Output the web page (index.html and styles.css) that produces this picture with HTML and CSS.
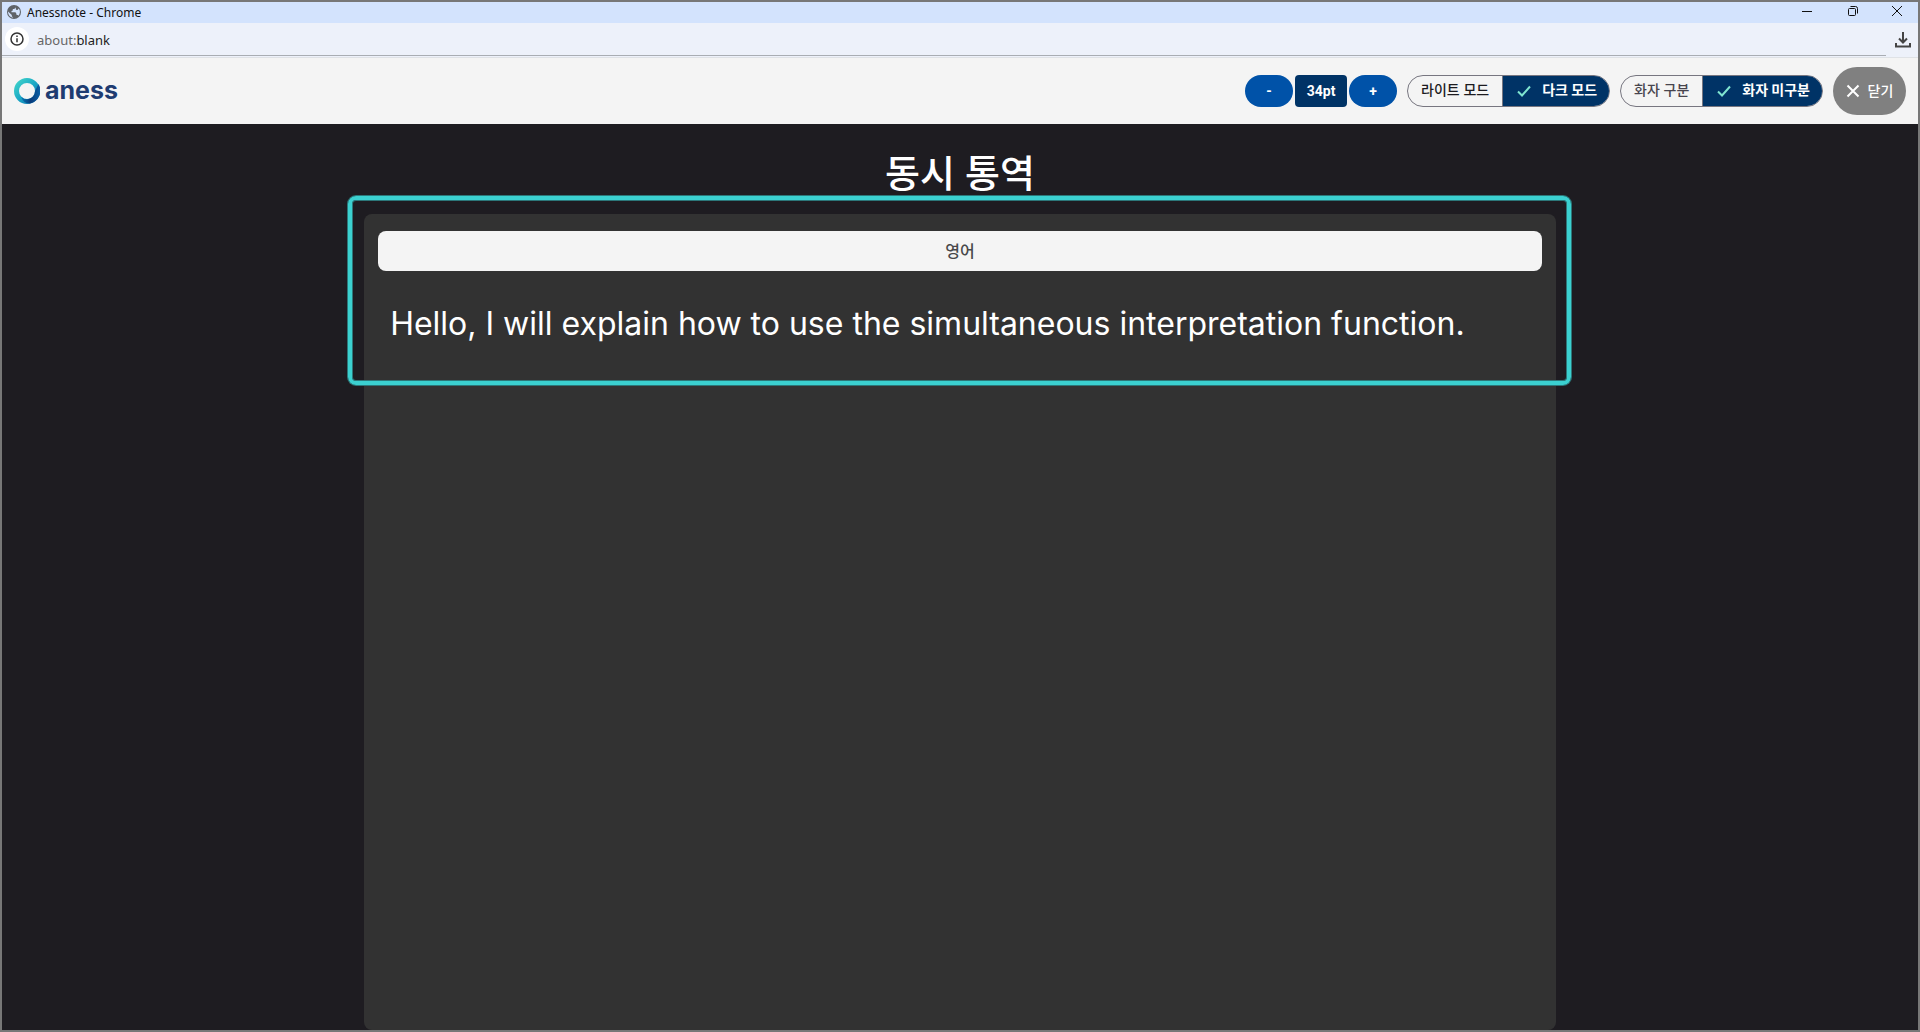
FILE: index.html
```html
<!DOCTYPE html>
<html lang="ko">
<head>
<meta charset="utf-8">
<title>Anessnote</title>
<link rel="stylesheet" href="styles.css">
</head>
<body>
<div class="window">
  <div class="titlebar">
    <svg class="globe" width="14" height="14" viewBox="0 0 14 14"><circle cx="7" cy="7" r="7" fill="#5f6368"/><path d="M1 6.500L4.800 10v1.200l1.500 1.500C3 12.400 1 9.800 1 6.500zM8.500 1.600v1.200L7.200 4H5.800v1.500L4.500 6v1.200h4L9.500 9v1h1.200l.8.700c1.700-2 2-5 .3-7.200L10.500 5 9 4.800z" fill="#d3e3fd"/></svg>
    <span class="window-title">Anessnote - Chrome</span>
    <div class="window-controls">
      <button type="button" aria-label="Minimize"><svg width="12" height="12" viewBox="0 0 12 12"><path d="M1 6.500h10"/></svg></button>
      <button type="button" aria-label="Restore"><svg width="12" height="12" viewBox="0 0 12 12"><rect x="1.500" y="3.500" width="7" height="7" rx="1"/><path d="M3.500 1.500h5q2 0 2 2v5"/></svg></button>
      <button type="button" aria-label="Close window"><svg width="12" height="12" viewBox="0 0 12 12"><path d="M1 1l10 10M11 1L1 11"/></svg></button>
    </div>
  </div>
  <div class="address">
    <div class="address-field">
      <span class="info"><svg width="14" height="14" viewBox="0 0 14 14" fill="none" stroke="#333" stroke-width="1.500"><circle cx="7" cy="7" r="6"/><path d="M7 6.200v4M7 3.600v1.500"/></svg></span>
      <span class="url"><span class="scheme">about:</span>blank</span>
    </div>
    <button class="download" type="button" aria-label="Downloads"><svg width="16" height="16" viewBox="0 0 16 16" fill="none" stroke="#444" stroke-width="2"><path d="M8 0v10M4 6.500l4 4 4-4M1 11v3.500h14V11"/></svg></button>
  </div>
  <header class="header">
    <a class="logo" href="#">
      <svg width="26" height="26" viewBox="0 0 26 26">
        <defs>
          <linearGradient id="ring" x1="0" y1="0" x2="1" y2="1"><stop offset="0" stop-color="#47dcc9"/><stop offset=".5" stop-color="#1ba8c6"/><stop offset="1" stop-color="#0a5fa6"/></linearGradient>
          <linearGradient id="shade" x1="0" y1="0" x2="1" y2="0"><stop offset="0" stop-color="#0778b8"/><stop offset=".5" stop-color="#083a7a"/><stop offset="1" stop-color="#0b62a8"/></linearGradient>
        </defs>
        <path fill="url(#ring)" fill-rule="evenodd" d="M13 0a13 13 0 1 1 0 26 13 13 0 0 1 0-26zm0 5a8 8 0 1 0 0 16 8 8 0 0 0 0-16z"/>
        <path fill="url(#shade)" d="M7 18.500Q10 22 14.500 21A8 8 0 0 0 21 13l3.500-7A13 13 0 0 1 16 25.500Q9.500 26 7 18.500z"/>
      </svg>
      <span>aness</span>
    </a>
    <div class="tools">
      <div class="sizer">
        <button type="button">-</button>
        <output>34pt</output>
        <button type="button">+</button>
      </div>
      <div class="segmented">
        <button class="strong" type="button" aria-pressed="false">라이트 모드</button>
        <button class="selected" type="button" aria-pressed="true"><svg width="14" height="12" viewBox="0 0 14 12"><path d="M1 6.500l4 4L13 1.500"/></svg><span>다크 모드</span></button>
      </div>
      <div class="segmented">
        <button type="button" aria-pressed="false">화자 구분</button>
        <button class="selected" type="button" aria-pressed="true"><svg width="14" height="12" viewBox="0 0 14 12"><path d="M1 6.500l4 4L13 1.500"/></svg><span>화자 미구분</span></button>
      </div>
      <button class="close" type="button"><svg width="14" height="14" viewBox="0 0 14 14"><path d="M1.500 1.500l11 11M12.500 1.500l-11 11"/></svg>닫기</button>
    </div>
  </header>
  <main class="main">
    <h1>동시 통역</h1>
    <section class="panel">
      <h2>영어</h2>
      <p>Hello, I will explain how to use the simultaneous interpretation function.</p>
      <div class="highlight"></div>
    </section>
  </main>
</div>
</body>
</html>
```
FILE: styles.css
```css
* { box-sizing: border-box; }
body { margin: 0; font-family: Inter, "Noto Sans CJK KR", sans-serif; }
button { margin: 0; padding: 0; border: 0; background: none; font: inherit; color: inherit; cursor: pointer; }
svg { display: block; flex: none; }
h1, h2, p { margin: 0; }

.window { display: flex; flex-direction: column; min-height: 100vh; border: 2px solid #777; background: #1e1c21; }

.titlebar { display: flex; align-items: center; gap: 6px; height: 21px; padding-left: 5px; background: #d3e3fd; }
.globe { margin-bottom: 2px; }
.window-title { font: 12px/20px "Noto Sans", sans-serif; color: #111; }
.window-controls { display: flex; align-self: flex-start; margin-left: auto; }
.window-controls button { display: grid; place-items: center; width: 46px; height: 18px; }
.window-controls button:last-child { width: 42px; }
.window-controls svg { fill: none; stroke: #111; }

.address { display: flex; justify-content: space-between; height: 35px; border-bottom: 1px solid #dfe2e6; background: #edf1fa; }
.address-field { display: flex; flex: 1; align-items: center; gap: 8px; height: 33px; padding-left: 3px; border-bottom: 1px solid #a9adb3; }
.info { display: grid; place-items: center; width: 24px; height: 24px; border-radius: 50%; background: #fff; }
.url { padding-top: 2px; font: 13px/20px "Noto Sans", sans-serif; color: #222; }
.scheme { color: #666; }
.download { width: 32px; height: 33px; padding-left: 9px; }

.header { display: flex; align-items: center; justify-content: space-between; height: 66px; padding: 0 12px; background: #f4f4f4; }
.logo { display: flex; align-items: center; gap: 5px; font: 700 25px/26px Inter, sans-serif; color: #1e3c71; text-decoration: none; }
.logo span { padding-bottom: 2px; }
.tools { display: flex; align-items: center; gap: 10px; font-size: 14px; line-height: 20px; }
.sizer { display: flex; gap: 2px; font: 700 14px/32px Roboto, sans-serif; color: #fff; text-align: center; }
.sizer button { width: 48px; height: 32px; border-radius: 16px; background: #0052a8; }
.sizer output { width: 52px; height: 32px; border-radius: 4px; background: #003366; }
.segmented { display: flex; height: 32px; overflow: hidden; border: 1px solid #777680; border-radius: 16px; color: #48454e; font-weight: 500; }
.segmented button { display: flex; align-items: center; gap: 11px; padding: 0 13px 2px; }
.segmented .strong { color: #1c1b1f; }
.segmented .selected { padding: 0 12px 0 14px; border-left: 1px solid #777680; background: #003366; color: #fff; font-weight: 700; }
.segmented span { padding-bottom: 2px; }
.segmented svg { fill: none; stroke: #7fe5d0; stroke-width: 2; }
.close { display: flex; align-items: center; justify-content: center; gap: 8px; width: 73px; height: 48px; border-radius: 24px; background: #808080; color: #fff; font-size: 14px; font-weight: 500; }
.close svg { stroke: #fff; stroke-width: 2; }

.main { display: flex; flex: 1; flex-direction: column; align-items: center; padding-top: 24px; color: #fff; }
.main h1 { margin-bottom: 16px; font-size: 38px; line-height: 50px; font-weight: 500; }
.panel { position: relative; flex: 1; width: 62.2%; padding: 17px 14px; border-radius: 8px; background: #323232; }
.panel h2 { border-radius: 8px; background: #f4f4f4; color: #48484a; font-size: 16px; line-height: 40px; font-weight: 500; text-align: center; }
.panel p { padding: 28px 12px; font-size: 32px; line-height: 50px; }
.highlight { position: absolute; top: -18px; left: -16px; right: -15px; height: 189px; border: 4px solid #3bd0d0; border-radius: 8px; box-shadow: 0 0 0 1px #2c7779, inset 0 0 0 1px #2c7779; pointer-events: none; }
```
